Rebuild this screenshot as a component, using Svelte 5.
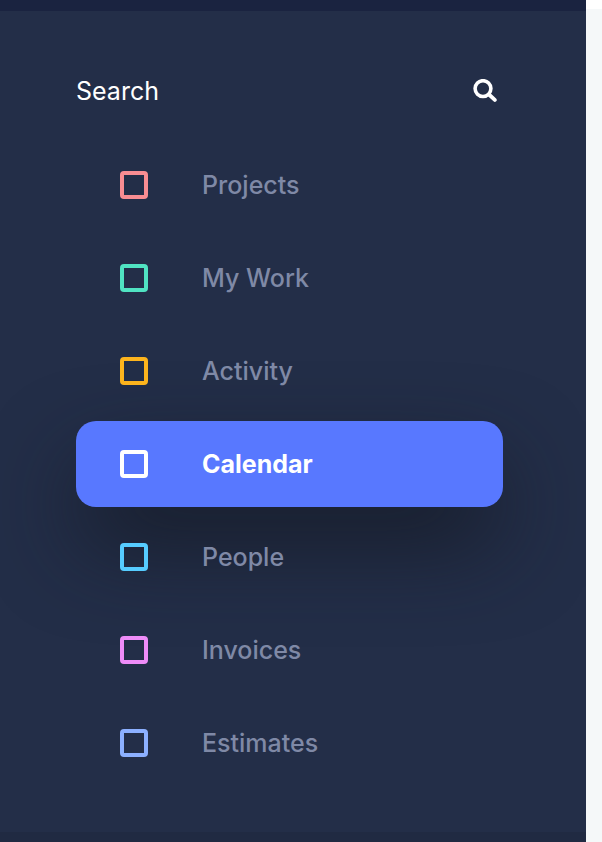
<script>
  const items = [
    { label: 'Projects', color: '#f98d92' },
    { label: 'My Work', color: '#50e3c2' },
    { label: 'Activity', color: '#fdb41d' },
    { label: 'Calendar', color: '#ffffff' },
    { label: 'People', color: '#56ccff' },
    { label: 'Invoices', color: '#ee8cf8' },
    { label: 'Estimates', color: '#8cb0ff' }
  ];
  let active = $state('Calendar');
  let query = $state('');
</script>

<div class="page">
  <aside class="sidebar">
    <form class="search" role="search" onsubmit={(e) => e.preventDefault()}>
      <input type="text" aria-label="Search" placeholder="Search" bind:value={query} />
      <button type="submit" aria-label="Submit search">
        <svg width="24" height="24" viewBox="0 0 24 24" fill="none" stroke="#fff" stroke-linecap="round" aria-hidden="true">
          <circle cx="10" cy="9.6" r="7.9" stroke-width="3.6" />
          <path d="M16 15.5L21.8 20.9" stroke-width="3.8" />
        </svg>
      </button>
    </form>
    <nav>
      {#each items as item}
        <a
          href="#{item.label}"
          class:active={item.label === active}
          aria-current={item.label === active ? 'page' : undefined}
          onclick={() => (active = item.label)}
        >
          <span class="icon" style="border-color: {item.color}"></span>
          <span class="label">{item.label}</span>
        </a>
      {/each}
    </nav>
  </aside>
  <main></main>
</div>

<style>
  :global(body) {
    margin: 0;
  }
  .page {
    display: flex;
    min-height: 100vh;
    font-family: Inter, 'Liberation Sans', sans-serif;
    font-size: 25px;
    line-height: 32px;
  }
  .sidebar {
    flex: 1;
    box-sizing: border-box;
    padding: 50px 83px 46px 76px;
    background: #232e48;
    border-top: 11px solid #1a2340;
    border-bottom: 10px solid #202a42;
  }
  main {
    width: 16px;
    background: #f5f8f9;
    border-top: 9px solid #fff;
    box-sizing: border-box;
  }
  .search {
    display: flex;
    align-items: center;
    justify-content: space-between;
    height: 60px;
    padding-right: 6px;
    margin-bottom: 21px;
  }
  input {
    flex: 1;
    min-width: 0;
    padding: 0;
    border: 0;
    background: none;
    color: #fff;
    font: inherit;
    outline: none;
  }
  input::placeholder {
    color: #fff;
    opacity: 1;
  }
  button {
    display: flex;
    padding: 0;
    border: 0;
    background: none;
    cursor: pointer;
  }
  nav {
    display: flex;
    flex-direction: column;
    gap: 7px;
  }
  a {
    display: flex;
    align-items: center;
    gap: 54px;
    height: 86px;
    padding: 0 44px;
    border-radius: 20px;
    color: #7f89a6;
    font-weight: 500;
    text-decoration: none;
  }
  .active {
    background: #5878ff;
    color: #fff;
    font-weight: 700;
    box-shadow: 0 40px 90px -8px rgba(20, 24, 34, 0.9);
  }
  .icon {
    box-sizing: border-box;
    width: 28px;
    height: 28px;
    border: 4px solid;
    border-radius: 4px;
  }
  .icon,
  .label {
    position: relative;
  }
</style>
